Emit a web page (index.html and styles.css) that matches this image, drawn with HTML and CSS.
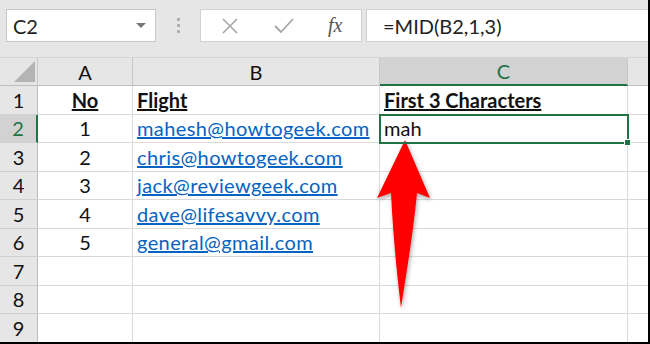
FILE: index.html
```html
<!DOCTYPE html>
<html>
<head>
<meta charset="utf-8">
<link rel="stylesheet" href="styles.css">
</head>
<body>
<div class="frame">
  <div class="toolbar">
    <div class="namebox">
      <span class="name">C2</span>
      <span class="caret"></span>
    </div>
    <div class="dots"><span></span><span></span><span></span></div>
    <div class="funcbox">
      <svg class="ico" width="20" height="20" viewBox="0 0 20 20"><path d="M3 3 L17 17 M17 3 L3 17" stroke="#a6a6a6" stroke-width="1.6" fill="none"/></svg>
      <svg class="ico" width="22" height="20" viewBox="0 0 22 20"><path d="M2 10 L8 16 L20 3" stroke="#a6a6a6" stroke-width="1.8" fill="none"/></svg>
      <span class="fx">fx</span>
    </div>
    <div class="formula">=MID(B2,1,3)</div>
  </div>
  <div class="sheet">
    <div class="hd corner"><span class="tri"></span></div>
    <div class="hd col">A</div>
    <div class="hd col">B</div>
    <div class="hd col sel">C</div>
    <div class="hd col last"></div>

    <div class="rh">1</div>
    <div class="c ctr"><b class="u">No</b></div>
    <div class="c"><b class="u">Flight</b></div>
    <div class="c"><b class="u">First 3 Characters</b></div>
    <div class="c last"></div>

    <div class="rh sel">2</div>
    <div class="c ctr">1</div>
    <div class="c"><a class="lnk">mahesh@howtogeek.com</a></div>
    <div class="c active">mah<span class="handle"></span></div>
    <div class="c last"></div>

    <div class="rh">3</div>
    <div class="c ctr">2</div>
    <div class="c"><a class="lnk">chris@howtogeek.com</a></div>
    <div class="c"></div>
    <div class="c last"></div>

    <div class="rh">4</div>
    <div class="c ctr">3</div>
    <div class="c"><a class="lnk">jack@reviewgeek.com</a></div>
    <div class="c"></div>
    <div class="c last"></div>

    <div class="rh">5</div>
    <div class="c ctr">4</div>
    <div class="c"><a class="lnk">dave@lifesavvy.com</a></div>
    <div class="c"></div>
    <div class="c last"></div>

    <div class="rh">6</div>
    <div class="c ctr">5</div>
    <div class="c"><a class="lnk">general@gmail.com</a></div>
    <div class="c"></div>
    <div class="c last"></div>

    <div class="rh">7</div>
    <div class="c"></div>
    <div class="c"></div>
    <div class="c"></div>
    <div class="c last"></div>

    <div class="rh">8</div>
    <div class="c"></div>
    <div class="c"></div>
    <div class="c"></div>
    <div class="c last"></div>

    <div class="rh">9</div>
    <div class="c"></div>
    <div class="c"></div>
    <div class="c"></div>
    <div class="c last"></div>
  </div>
  <svg class="arrow" width="650" height="344" viewBox="0 0 650 344">
    <defs>
      <filter id="sh" x="-50%" y="-20%" width="200%" height="140%">
        <feDropShadow dx="1" dy="2" stdDeviation="2" flood-color="#000" flood-opacity="0.35"/>
      </filter>
    </defs>
    <path d="M405 140 L430 198 L417 193 C413 235 406 275 401 308 C397 275 393 235 391 193 L377 198 Z" fill="#ff0000" filter="url(#sh)"/>
  </svg>
</div>
</body>
</html>
```

FILE: styles.css
```css
* { box-sizing: border-box; }
html, body { margin: 0; padding: 0; }
body {
  width: 650px;
  height: 344px;
  overflow: hidden;
  background: #fff;
  font-family: Lato, "Open Sans", sans-serif;
}
.frame {
  position: relative;
  width: 650px;
  height: 344px;
  border-right: 2px solid #000;
  border-bottom: 2px solid #000;
  overflow: hidden;
  background: #fff;
}
.toolbar {
  height: 57px;
  background: #e6e6e6;
  display: flex;
  align-items: flex-start;
  padding: 9px 0 0 6px;
}
.namebox {
  width: 150px;
  height: 33px;
  background: #fff;
  border: 1px solid #c6c6c6;
  display: flex;
  align-items: center;
  justify-content: space-between;
  padding: 0 9px 0 6px;
}
.name { font-size: 20px; color: #222; }
.caret {
  width: 0; height: 0;
  border-left: 5px solid transparent;
  border-right: 5px solid transparent;
  border-top: 5px solid #777;
}
.dots {
  width: 44px;
  height: 33px;
  display: flex;
  flex-direction: column;
  align-items: center;
  justify-content: center;
  gap: 3px;
}
.dots span { width: 3px; height: 3px; background: #b0b0b0; }
.funcbox {
  width: 162px;
  height: 33px;
  background: #fff;
  border: 1px solid #d0d0d0;
  display: flex;
  align-items: center;
  padding-left: 19px;
  gap: 33px;
}
.ico { display: block; }
.fx {
  font-family: "Liberation Serif", serif;
  font-style: italic;
  font-size: 20px;
  color: #555;
}
.formula {
  margin-left: 4px;
  flex: 1;
  height: 33px;
  background: #fff;
  border: 1px solid #d0d0d0;
  border-right: none;
  font-size: 20px;
  color: #222;
  display: flex;
  align-items: center;
  padding-left: 16px;
}
.sheet {
  display: grid;
  grid-template-columns: 38px 95px 247px 248px 1fr;
  grid-template-rows: 29px repeat(9, 28.5px);
  font-size: 20px;
  color: #111;
}
.hd {
  background: #e6e6e6;
  border-top: 1px solid #d4d4d4;
  border-right: 1px solid #c8c8c8;
  border-bottom: 1px solid #bdbdbd;
  display: flex;
  align-items: center;
  justify-content: center;
  font-size: 20px;
  color: #111;
}
.hd.col.sel {
  background: #d2d2d2;
  color: #217346;
  border-bottom: 2px solid #217346;
}
.hd.last { border-right: none; }
.corner { position: relative; }
.tri {
  position: absolute;
  left: 14px;
  bottom: 3px;
  width: 0; height: 0;
  border-left: 21px solid transparent;
  border-bottom: 21px solid #b4b4b4;
}
.rh {
  background: #e6e6e6;
  border-right: 1px solid #bdbdbd;
  border-bottom: 1px solid #d0d0d0;
  display: flex;
  align-items: center;
  justify-content: center;
  color: #111;
}
.rh.sel {
  background: #d2d2d2;
  color: #217346;
  border-right: 2px solid #217346;
}
.c {
  border-right: 1px solid #d9d9d9;
  border-bottom: 1px solid #d9d9d9;
  display: flex;
  align-items: center;
  padding-left: 4px;
  white-space: nowrap;
  position: relative;
}
.c.last { border-right: none; }
.ctr { justify-content: center; padding-left: 0; }
.u { text-decoration: underline; }
.lnk { color: #0563c1; text-decoration: underline; letter-spacing: 0.4px; }
.active {
  outline: 2px solid #217346;
  outline-offset: -1px;
  z-index: 1;
}
.handle {
  position: absolute;
  right: -4px;
  bottom: -4px;
  width: 7px;
  height: 7px;
  background: #217346;
  border: 1px solid #fff;
}
.arrow {
  position: absolute;
  left: 0;
  top: 0;
  pointer-events: none;
}
```
